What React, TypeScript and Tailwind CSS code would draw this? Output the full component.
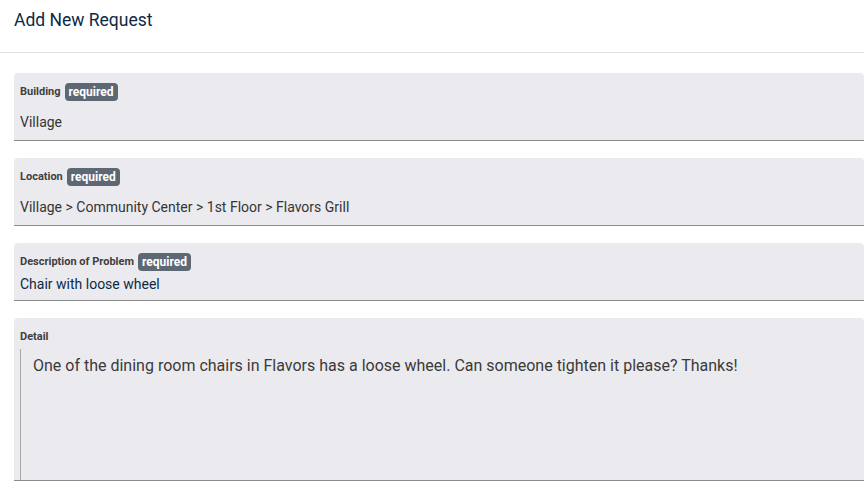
const Badge = () => (
    <span className="ml-[4px] inline-flex h-[18px] items-center rounded-[4px] bg-[#5e6874] px-[4px] text-[12px] font-bold leading-none text-white">
        required
    </span>
)

const FieldLabel = ({ text, required }: { text: string; required?: boolean }) => (
    <div className="flex h-[18px] items-center text-[11px] font-bold text-[#404040]">
        {text}
        {required && <Badge />}
    </div>
)

export default function App() {
    return (
        <div className="h-[491px] w-[864px] overflow-hidden bg-white font-['Roboto','Liberation_Sans',sans-serif]">
            <div className="h-[53px] border-b border-[#e2e2e2] pl-[14px] pt-[8px] text-[17.5px] leading-[24px] text-[#0c2a45]">
                Add New Request
            </div>

            <div className="ml-[14px] mt-[20px] flex flex-col gap-[17px]">
                <div className="rounded-t-[4px] border-b border-[#8c8c8c] bg-[#ebebef] pb-[8px] pl-[6px] pt-[10px]">
                    <FieldLabel text="Building" required />
                    <div className="mt-[11px] text-[14px] leading-[20px] text-[#353535]">Village</div>
                </div>

                <div className="rounded-t-[4px] border-b border-[#8c8c8c] bg-[#ebebef] pb-[8px] pl-[6px] pt-[10px]">
                    <FieldLabel text="Location" required />
                    <div className="mt-[11px] text-[14px] leading-[20px] text-[#353535]">
                        Village &gt; Community Center &gt; 1st Floor &gt; Flavors Grill
                    </div>
                </div>

                <div className="rounded-t-[4px] border-b border-[#8c8c8c] bg-[#ebebef] pb-[6px] pl-[6px] pt-[10px]">
                    <FieldLabel text="Description of Problem" required />
                    <div className="mt-[3px] text-[14px] leading-[20px] text-[#0c2a45]">Chair with loose wheel</div>
                </div>

                <div className="rounded-t-[4px] border-b border-[#8c8c8c] bg-[#ebebef] pl-[6px] pt-[10px]">
                    <FieldLabel text="Detail" />
                    <div className="mt-[3px] h-[131px] border-l border-[#a8a8a8] pl-[12px] pt-[5px] text-[16px] leading-[24px] text-[#3a3a3a]">
                        One of the dining room chairs in Flavors has a loose wheel. Can someone tighten it please? Thanks!
                    </div>
                </div>
            </div>
        </div>
    )
}
